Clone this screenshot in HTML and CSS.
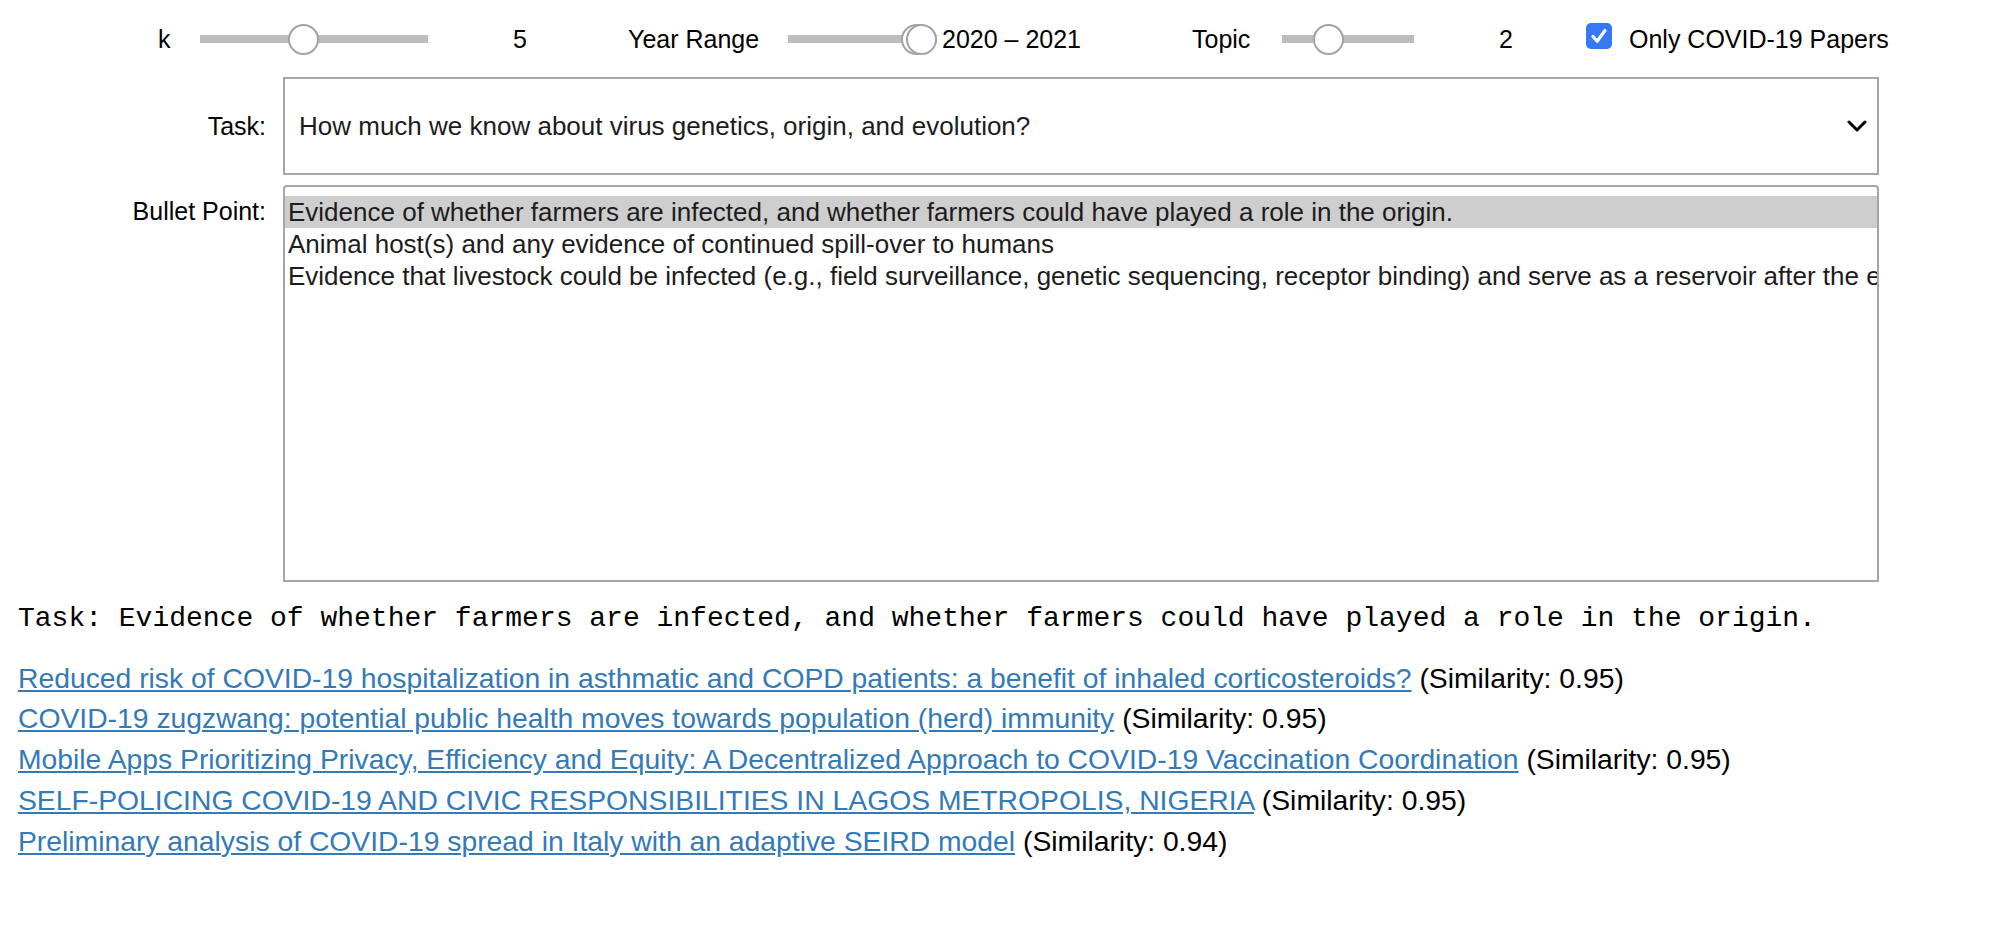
FILE: index.html
```html
<!DOCTYPE html>
<html lang="en">
<head>
<meta charset="utf-8">
<title>COVID-19 Task Explorer</title>
<link rel="stylesheet" href="styles.css">
</head>
<body>
  <div class="controls">
    <span class="ctl-label">k</span>
    <div class="slider" role="slider" aria-valuenow="5">
      <div class="track"></div>
      <span class="thumb" style="left:88px"></span>
    </div>
    <span class="ctl-value pad-value">5</span>
    <span class="ctl-label">Year Range</span>
    <div class="slider" role="slider" aria-valuenow="2020">
      <div class="track"></div>
      <span class="thumb" style="left:113px"></span>
      <span class="thumb" style="left:118px"></span>
    </div>
    <span class="ctl-value pad-range">2020 – 2021</span>
    <span class="ctl-label">Topic</span>
    <div class="slider" role="slider" aria-valuenow="2">
      <div class="track"></div>
      <span class="thumb" style="left:31px"></span>
    </div>
    <span class="ctl-value pad-value">2</span>
    <span class="checkbox" role="checkbox" aria-checked="true">
      <svg viewBox="0 0 26 26" width="26" height="26"><rect x="0" y="0" width="26" height="26" rx="5" fill="#3478f6"/><path d="M7 13.5 L11.2 18.2 L19 7.5" fill="none" stroke="#fff" stroke-width="3.2" stroke-linecap="round" stroke-linejoin="round"/></svg>
    </span>
    <span class="ctl-label">Only COVID-19 Papers</span>
  </div>

  <div class="form">
    <label class="field-label center">Task:</label>
    <div class="select-wrap">
      <select class="select">
        <option>How much we know about virus genetics, origin, and evolution?</option>
      </select>
      <svg class="chevron" viewBox="0 0 20 12" width="20" height="12"><path d="M2 2 L10 10 L18 2" fill="none" stroke="#000" stroke-width="3" stroke-linecap="round" stroke-linejoin="round"/></svg>
    </div>

    <label class="field-label top">Bullet Point:</label>
    <div class="listbox" role="listbox">
      <div class="opt selected">Evidence of whether farmers are infected, and whether farmers could have played a role in the origin.</div>
      <div class="opt">Animal host(s) and any evidence of continued spill-over to humans</div>
      <div class="opt">Evidence that livestock could be infected (e.g., field surveillance, genetic sequencing, receptor binding) and serve as a reservoir after the epidemic appears to be over.</div>
    </div>
  </div>

  <div class="query">Task: Evidence of whether farmers are infected, and whether farmers could have played a role in the origin.</div>

  <div class="results">
    <div class="result"><a href="#">Reduced risk of COVID-19 hospitalization in asthmatic and COPD patients: a benefit of inhaled corticosteroids?</a> (Similarity: 0.95)</div>
    <div class="result"><a href="#">COVID-19 zugzwang: potential public health moves towards population (herd) immunity</a> (Similarity: 0.95)</div>
    <div class="result"><a href="#">Mobile Apps Prioritizing Privacy, Efficiency and Equity: A Decentralized Approach to COVID-19 Vaccination Coordination</a> (Similarity: 0.95)</div>
    <div class="result"><a href="#">SELF-POLICING COVID-19 AND CIVIC RESPONSIBILITIES IN LAGOS METROPOLIS, NIGERIA</a> (Similarity: 0.95)</div>
    <div class="result"><a href="#">Preliminary analysis of COVID-19 spread in Italy with an adaptive SEIRD model</a> (Similarity: 0.94)</div>
  </div>
</body>
</html>
```

FILE: styles.css
```css
html, body {
  background: #fff;
}

body {
  margin: 0;
  padding: 0 18px;
  font-family: "Liberation Sans", Arial, Helvetica, sans-serif;
  color: #000;
}

/* top control bar */
.controls {
  display: grid;
  grid-template-columns: 42px 228px 200px 160px 149px 255px 90px 132px 172px 43px auto;
  align-items: center;
  height: 77px;
  padding: 1px 0 0 140px;
  box-sizing: border-box;
  font-size: 25px;
}

.ctl-label,
.ctl-value {
  white-space: nowrap;
  line-height: 30px;
}

.pad-value {
  padding-left: 85px;
}

.pad-range {
  padding-left: 5px;
}

.slider {
  position: relative;
  height: 31px;
}

.track {
  margin-top: 11.5px;
  height: 8px;
  background: #bdbdbd;
}

.thumb {
  position: absolute;
  top: 0;
  width: 31px;
  height: 31px;
  box-sizing: border-box;
  border-radius: 50%;
  border: 2px solid #a3a3a3;
  background: #fff;
}

.checkbox {
  display: flex;
  align-items: center;
  height: 26px;
  margin-top: -6px;
}

/* form */
.form {
  display: grid;
  grid-template-columns: 248px 1596px;
  column-gap: 17px;
  row-gap: 10px;
}

.field-label {
  text-align: right;
  font-size: 25px;
  line-height: 30px;
  white-space: nowrap;
}

.field-label.center {
  align-self: center;
}

.field-label.top {
  align-self: start;
  padding-top: 11px;
}

.select-wrap {
  position: relative;
  height: 98px;
}

.select {
  appearance: none;
  -webkit-appearance: none;
  width: 100%;
  height: 98px;
  margin: 0;
  box-sizing: border-box;
  border: 2px solid #a6a6a6;
  border-radius: 0;
  background: #fff;
  padding: 0 60px 0 14px;
  font-family: "Liberation Sans", Arial, sans-serif;
  font-size: 26px;
  color: #1c1c1c;
}

.chevron {
  position: absolute;
  right: 12px;
  top: 43px;
}

.listbox {
  height: 397px;
  box-sizing: border-box;
  border: 2px solid #a6a6a6;
  border-radius: 4px 4px 0 0;
  padding-top: 9px;
  overflow: hidden;
  font-size: 26px;
  color: #1c1c1c;
}

.opt {
  height: 32px;
  line-height: 32px;
  padding-left: 3px;
  white-space: nowrap;
}

.opt.selected {
  background: #cecece;
}

/* results */
.query {
  margin-top: 21px;
  font-family: "Liberation Mono", "Courier New", monospace;
  font-size: 28px;
  line-height: 32px;
  white-space: pre;
}

.results {
  margin-top: 22.5px;
  font-size: 28.3px;
}

.result {
  line-height: 40.75px;
  white-space: nowrap;
}

.result a {
  color: #337ab7;
  text-decoration: underline;
}
```
